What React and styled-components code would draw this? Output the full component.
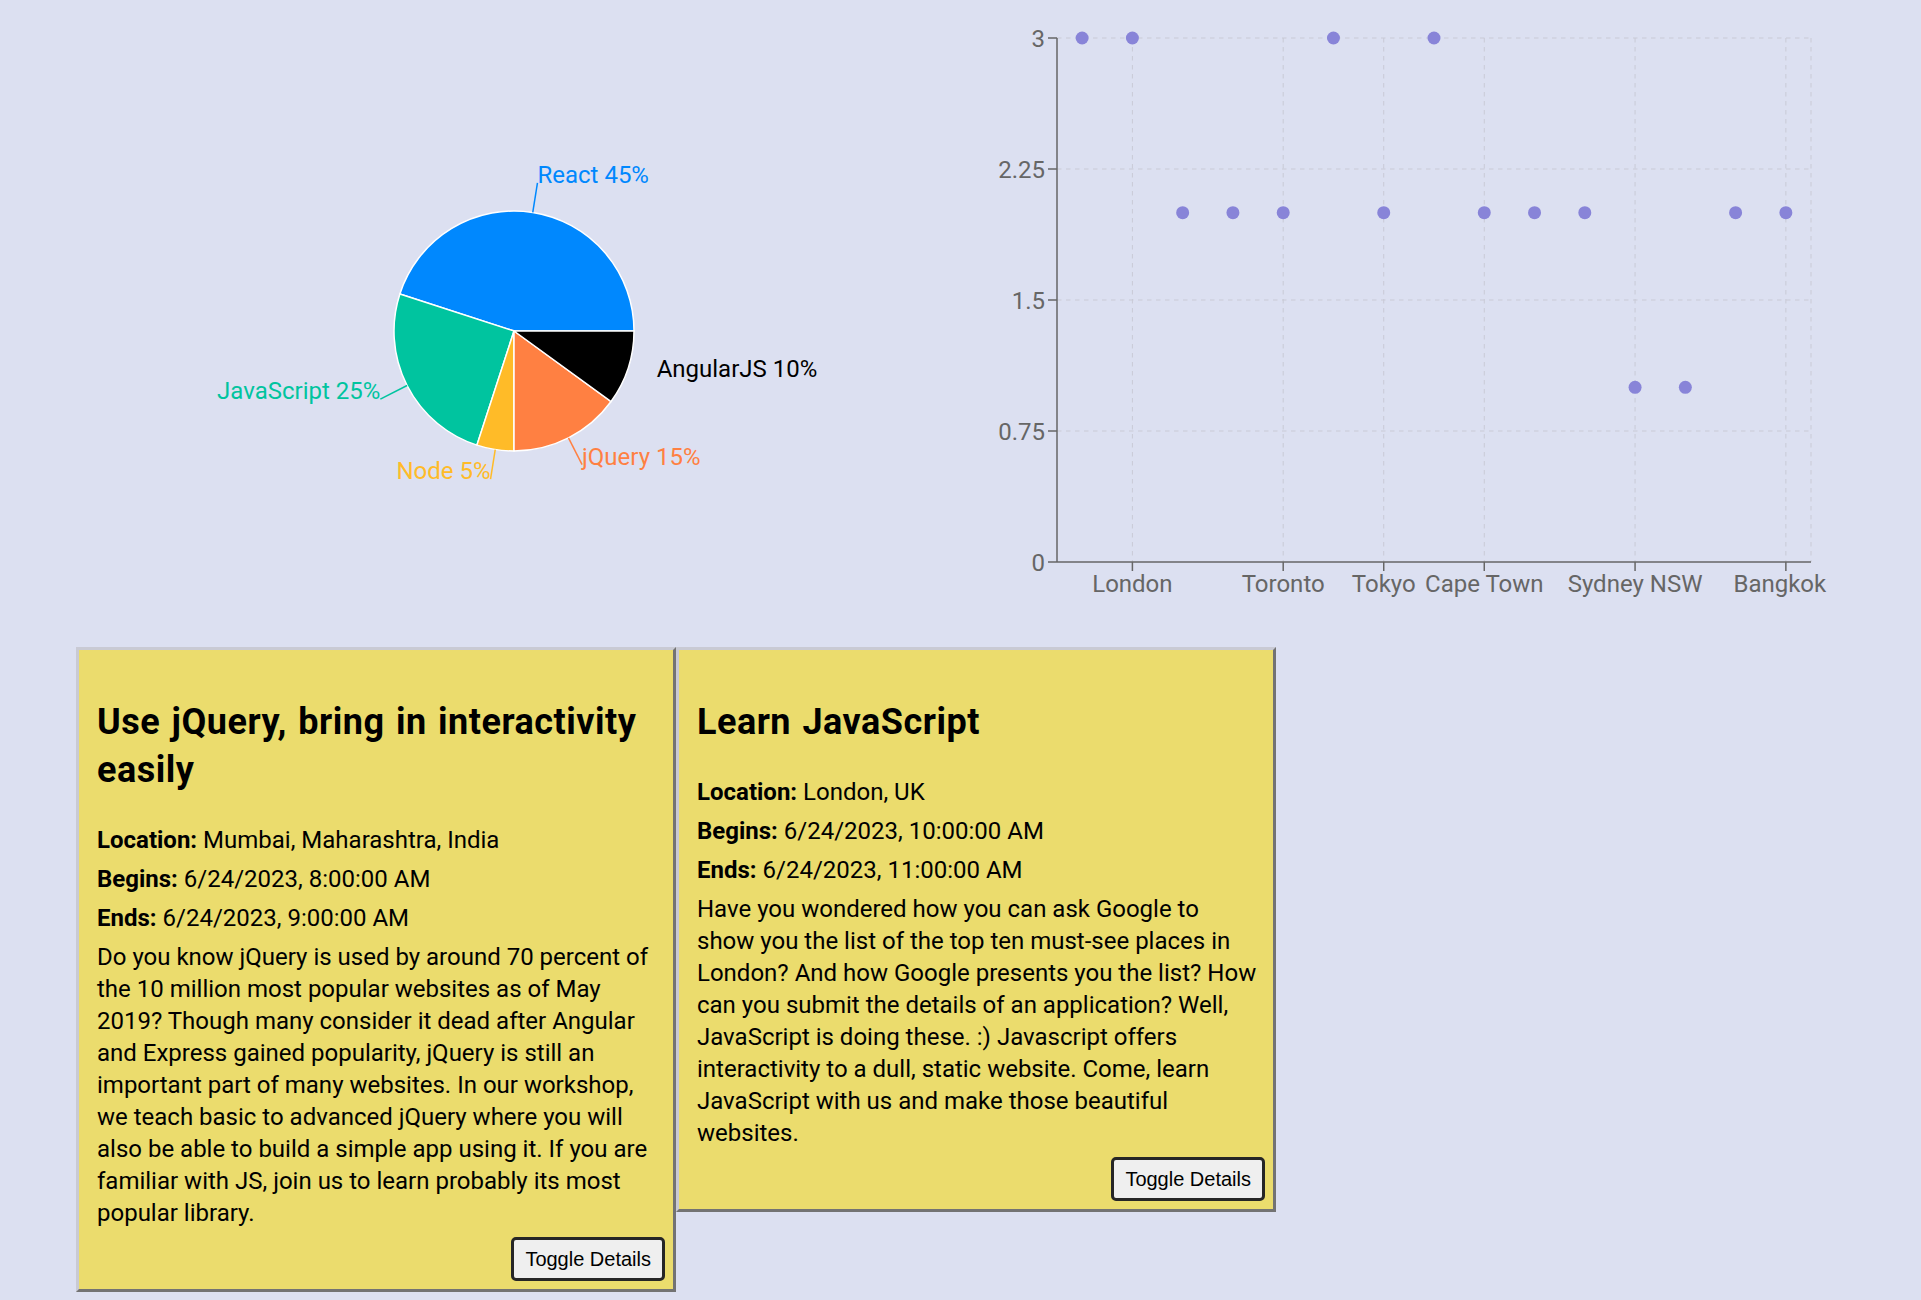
import React, { useState } from 'react';
import styled, { createGlobalStyle } from 'styled-components';

const PIE = { cx: 514, cy: 331, r: 120, labelR: 150 };

const PIE_DATA = [
  { name: 'React', value: 45, color: '#0088FE' },
  { name: 'JavaScript', value: 25, color: '#00C49F' },
  { name: 'Node', value: 5, color: '#FFBB28' },
  { name: 'jQuery', value: 15, color: '#FF8042' },
  { name: 'AngularJS', value: 10 },
];

// plot box of the scatter chart, in page pixels
const PLOT = { left: 1057, right: 1811, top: 38, bottom: 562, max: 3 };

const SCATTER_DATA = [3, 3, 2, 2, 2, 3, 2, 3, 2, 2, 2, 1, 1, 2, 2];

const X_TICKS = [
  { index: 1, label: 'London' },
  { index: 4, label: 'Toronto' },
  { index: 6, label: 'Tokyo' },
  { index: 8, label: 'Cape Town' },
  { index: 11, label: 'Sydney NSW' },
  { index: 14, label: 'Bangkok', shift: -6 },
];

const Y_TICKS = [0, 0.75, 1.5, 2.25, 3];

const EVENTS = [
  {
    id: 1,
    title: 'Use jQuery, bring in interactivity easily',
    location: 'Mumbai, Maharashtra, India',
    begins: '6/24/2023, 8:00:00 AM',
    ends: '6/24/2023, 9:00:00 AM',
    details:
      'Do you know jQuery is used by around 70 percent of the 10 million most popular websites as of May 2019? Though many consider it dead after Angular and Express gained popularity, jQuery is still an important part of many websites. In our workshop, we teach basic to advanced jQuery where you will also be able to build a simple app using it. If you are familiar with JS, join us to learn probably its most popular library.',
  },
  {
    id: 2,
    title: 'Learn JavaScript',
    location: 'London, UK',
    begins: '6/24/2023, 10:00:00 AM',
    ends: '6/24/2023, 11:00:00 AM',
    details:
      'Have you wondered how you can ask Google to show you the list of the top ten must-see places in London? And how Google presents you the list? How can you submit the details of an application? Well, JavaScript is doing these. :) Javascript offers interactivity to a dull, static website. Come, learn JavaScript with us and make those beautiful websites.',
  },
];

const polar = (angle, radius) => {
  const rad = (angle * Math.PI) / 180;
  return [PIE.cx + radius * Math.cos(rad), PIE.cy - radius * Math.sin(rad)];
};

const sectorPath = (start, end) => {
  const [x1, y1] = polar(start, PIE.r);
  const [x2, y2] = polar(end, PIE.r);
  const large = end - start > 180 ? 1 : 0;
  return `M${PIE.cx},${PIE.cy} L${x1},${y1} A${PIE.r},${PIE.r} 0 ${large} 0 ${x2},${y2} Z`;
};

const bandX = (i) =>
  PLOT.left + ((PLOT.right - PLOT.left) / SCATTER_DATA.length) * (i + 0.5);
const valueY = (v) => PLOT.bottom - ((PLOT.bottom - PLOT.top) * v) / PLOT.max;

const SkillsPie = () => {
  const total = PIE_DATA.reduce((sum, d) => sum + d.value, 0);
  let angle = 0;
  const slices = PIE_DATA.map((d) => {
    const start = angle;
    const end = angle + (d.value / total) * 360;
    angle = end;
    return { ...d, start, end, mid: (start + end) / 2 };
  });

  return (
    <PieSvg width="940" height="647" viewBox="0 0 940 647">
      {slices.map((s) => (
        <path
          key={s.name}
          d={sectorPath(s.start, s.end)}
          fill={s.color || '#000'}
          stroke="#fff"
          strokeWidth="1.5"
        />
      ))}
      {slices.map((s) => {
        const [x0, y0] = polar(s.mid, PIE.r);
        const [x, y] = polar(s.mid, PIE.labelR);
        return (
          <g key={s.name}>
            {s.color && (
              <polyline
                points={`${x0},${y0} ${x},${y}`}
                fill="none"
                stroke={s.color}
                strokeWidth="1.5"
              />
            )}
            <PieLabel
              x={x}
              y={y}
              fill={s.color || '#000'}
              textAnchor={x > PIE.cx ? 'start' : 'end'}
            >
              {`${s.name} ${s.value}%`}
            </PieLabel>
          </g>
        );
      })}
    </PieSvg>
  );
};

const CityScatter = () => (
  <ScatterSvg width="981" height="647" viewBox="940 0 981 647">
    <g stroke="#c9cad6" strokeDasharray="4.5 4.5" strokeWidth="1">
      {Y_TICKS.filter((v) => v > 0).map((v) => (
        <line key={v} x1={PLOT.left} x2={PLOT.right} y1={valueY(v)} y2={valueY(v)} />
      ))}
      {X_TICKS.map((t) => (
        <line key={t.label} x1={bandX(t.index)} x2={bandX(t.index)} y1={PLOT.top} y2={PLOT.bottom} />
      ))}
      <line x1={PLOT.right} x2={PLOT.right} y1={PLOT.top} y2={PLOT.bottom} />
    </g>

    <g stroke="#666" strokeWidth="1.5">
      <line x1={PLOT.left} x2={PLOT.left} y1={PLOT.top} y2={PLOT.bottom} />
      <line x1={PLOT.left} x2={PLOT.right} y1={PLOT.bottom} y2={PLOT.bottom} />
      {Y_TICKS.map((v) => (
        <line key={v} x1={PLOT.left - 9} x2={PLOT.left} y1={valueY(v)} y2={valueY(v)} />
      ))}
      {X_TICKS.map((t) => (
        <line key={t.label} x1={bandX(t.index)} x2={bandX(t.index)} y1={PLOT.bottom} y2={PLOT.bottom + 9} />
      ))}
    </g>

    {Y_TICKS.map((v) => (
      <AxisText key={v} x={PLOT.left - 12} y={valueY(v)} dy="0.355em" textAnchor="end">
        {v}
      </AxisText>
    ))}
    {X_TICKS.map((t) => (
      <AxisText
        key={t.label}
        x={bandX(t.index) + (t.shift || 0)}
        y={PLOT.bottom + 30}
        textAnchor="middle"
      >
        {t.label}
      </AxisText>
    ))}

    {SCATTER_DATA.map((v, i) => (
      <circle key={i} cx={bandX(i)} cy={valueY(v)} r="6.5" fill="#8884d8" />
    ))}
  </ScatterSvg>
);

const EventCard = ({ event }) => {
  const [showDetails, setShowDetails] = useState(true);

  return (
    <Card>
      <Title>{event.title}</Title>
      <Info>
        <b>Location:</b> {event.location}
      </Info>
      <Info>
        <b>Begins:</b> {event.begins}
      </Info>
      <Info>
        <b>Ends:</b> {event.ends}
      </Info>
      {showDetails && <Details>{event.details}</Details>}
      <ButtonRow>
        <ToggleButton onClick={() => setShowDetails(!showDetails)}>
          Toggle Details
        </ToggleButton>
      </ButtonRow>
    </Card>
  );
};

const App = () => (
  <>
    <GlobalStyle />
    <ChartRow>
      <SkillsPie />
      <CityScatter />
    </ChartRow>
    <CardRow>
      {EVENTS.map((event) => (
        <EventCard key={event.id} event={event} />
      ))}
    </CardRow>
  </>
);

export default App;

const GlobalStyle = createGlobalStyle`
  body {
    margin: 0;
    background: #dce0f1;
    font-family: Roboto, 'Noto Sans', sans-serif;
    font-size: 24px;
    color: #000;
  }
`;

const ChartRow = styled.div`
  display: flex;
  height: 647px;
`;

const PieSvg = styled.svg`
  display: block;
  flex: none;
`;

const ScatterSvg = styled.svg`
  display: block;
  flex: none;
`;

const PieLabel = styled.text`
  font-family: Roboto, 'Noto Sans', sans-serif;
  font-size: 24px;
`;

const AxisText = styled.text`
  font-family: Roboto, 'Noto Sans', sans-serif;
  font-size: 24px;
  fill: #666;
`;

const CardRow = styled.div`
  display: flex;
  align-items: flex-start;
  padding-left: 76px;
`;

const Card = styled.div`
  box-sizing: border-box;
  width: 600px;
  padding: 18px 14px 0 18px;
  background: #ebdc6d;
  border: 3px solid;
  border-color: #c9cad4 #737373 #737373 #c9cad4;
`;

const Title = styled.h2`
  margin: 30px 0;
  font-size: 36px;
  line-height: 48px;
  font-weight: 700;
  letter-spacing: 0.5px;
  word-spacing: 2px;
`;

const Info = styled.p`
  margin: 0 0 7px;
  line-height: 32px;

  b {
    font-weight: 700;
  }
`;

const Details = styled.p`
  margin: 0;
  line-height: 32px;
`;

const ButtonRow = styled.div`
  display: flex;
  justify-content: flex-end;
  margin: 8px -6px 8px 0;
`;

const ToggleButton = styled.button`
  height: 44px;
  padding: 0 11px;
  font-family: 'Liberation Sans', Arial, sans-serif;
  font-size: 20px;
  color: #000;
  background: #efefef;
  border: 3px solid #262626;
  border-radius: 5px;
  cursor: pointer;
`;
